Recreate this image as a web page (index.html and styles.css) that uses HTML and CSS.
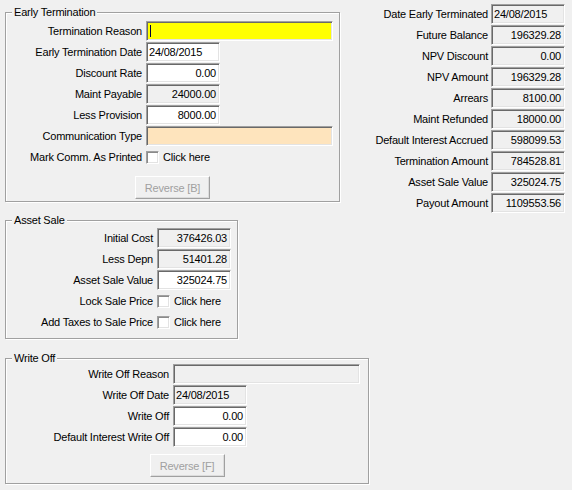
FILE: index.html
```html
<!DOCTYPE html>
<html>
<head>
<meta charset="utf-8">
<link rel="stylesheet" href="styles.css">
</head>
<body>
<div class="top">
  <div class="grp et">
    <div class="legend">Early Termination</div>
    <div class="form et-form">
      <label>Termination Reason</label><div class="box long yellow"><span class="caret"></span></div>
      <label>Early Termination Date</label><div class="box white">24/08/2015</div>
      <label>Discount Rate</label><div class="box white num">0.00</div>
      <label>Maint Payable</label><div class="box ro num">24000.00</div>
      <label>Less Provision</label><div class="box white num">8000.00</div>
      <label>Communication Type</label><div class="box long peach"></div>
      <label>Mark Comm. As Printed</label><div class="check"><span class="cb"></span>Click here</div>
    </div>
    <div class="btnrow b-et"><button class="btn" disabled>Reverse [B]</button></div>
  </div>
  <div class="summary">
    <label>Date Early Terminated</label><div class="box ro">24/08/2015</div>
    <label>Future Balance</label><div class="box ro num">196329.28</div>
    <label>NPV Discount</label><div class="box ro num">0.00</div>
    <label>NPV Amount</label><div class="box ro num">196329.28</div>
    <label>Arrears</label><div class="box ro num">8100.00</div>
    <label>Maint Refunded</label><div class="box ro num">18000.00</div>
    <label>Default Interest Accrued</label><div class="box ro num">598099.53</div>
    <label>Termination Amount</label><div class="box ro num">784528.81</div>
    <label>Asset Sale Value</label><div class="box ro num">325024.75</div>
    <label>Payout Amount</label><div class="box ro num">1109553.56</div>
  </div>
</div>

<div class="grp asset">
  <div class="legend">Asset Sale</div>
  <div class="form asset-form">
    <label>Initial Cost</label><div class="box ro num">376426.03</div>
    <label>Less Depn</label><div class="box ro num">51401.28</div>
    <label>Asset Sale Value</label><div class="box white num">325024.75</div>
    <label>Lock Sale Price</label><div class="check"><span class="cb"></span>Click here</div>
    <label>Add Taxes to Sale Price</label><div class="check"><span class="cb"></span>Click here</div>
  </div>
</div>

<div class="grp wo">
  <div class="legend">Write Off</div>
  <div class="form wo-form">
    <label>Write Off Reason</label><div class="box long ro"></div>
    <label>Write Off Date</label><div class="box ro">24/08/2015</div>
    <label>Write Off</label><div class="box white num">0.00</div>
    <label>Default Interest Write Off</label><div class="box white num">0.00</div>
  </div>
  <div class="btnrow b-wo"><button class="btn" disabled>Reverse [F]</button></div>
</div>
</body>
</html>
```

FILE: styles.css
```css
* { box-sizing: border-box; }
html, body { background: #f0f0f0; }
body {
  margin: 0;
  padding: 0 0 0 5px;
  width: 572px;
  height: 490px;
  overflow: hidden;
  font-family: "Liberation Sans", Arial, sans-serif;
  font-size: 11px;
  letter-spacing: -0.2px;
  color: #000;
}
.top {
  display: flex;
  align-items: flex-start;
}
.grp {
  position: relative;
  border: 1px solid #a0a0a0;
  box-shadow: inset 1px 1px 0 #fff, 1px 1px 0 #fff;
}
.legend {
  position: absolute;
  left: 6px;
  top: -7px;
  line-height: 13px;
  padding: 0 2px 0 2px;
  background: #f0f0f0;
}
.et {
  width: 335px;
  margin-top: 12px;
  padding: 8px 0 2px 0;
}
.asset {
  width: 233px;
  margin-top: 7px;
  padding: 7px 0 6px 0;
}
.wo {
  width: 364px;
  margin-top: 19px;
  padding: 5px 0 6px 0;
}
.form {
  display: grid;
  column-gap: 4px;
  row-gap: 1px;
  grid-auto-rows: 20px;
  align-items: center;
  justify-items: start;
}
.et-form { grid-template-columns: 136px auto; }
.asset-form { grid-template-columns: 147px auto; }
.wo-form { grid-template-columns: 163px auto; }
.form label, .summary label {
  justify-self: end;
  white-space: nowrap;
}
.summary {
  flex: 1;
  padding: 4px 7px 0 0;
  display: grid;
  grid-template-columns: 1fr 74px;
  column-gap: 3px;
  row-gap: 1px;
  grid-auto-rows: 20px;
  align-items: center;
}
.box {
  width: 74px;
  height: 20px;
  line-height: 18px;
  padding: 0 3px 0 2px;
  border: 1px solid;
  border-color: #a0a0a0 #fff #fff #a0a0a0;
  box-shadow: inset 1px 1px 0 #696969, inset -1px -1px 0 #e3e3e3;
  white-space: nowrap;
  overflow: hidden;
}
.box.long { width: 187px; }
.num { text-align: right; }
.white { background: #fff; }
.ro { background: #f0f0f0; }
.yellow { background: #ffff00; }
.peach { background: #fee4bd; }
.caret {
  display: inline-block;
  width: 1px;
  height: 12px;
  margin: 3px 0 0 1px;
  vertical-align: top;
  background: #00003c;
}
.check {
  display: flex;
  align-items: center;
}
.cb {
  width: 13px;
  height: 13px;
  margin-right: 4px;
  background: #fff;
  border: 1px solid;
  border-color: #a0a0a0 #fff #fff #a0a0a0;
  box-shadow: inset 1px 1px 0 #8a8a8a, inset -1px -1px 0 #e3e3e3;
}
.btnrow {
  display: flex;
  justify-content: center;
}
.b-et { margin-top: 9px; }
.b-wo { margin-top: 7px; }
.btn {
  width: 75px;
  height: 23px;
  padding: 0;
  font-family: "Liberation Sans", Arial, sans-serif;
  font-size: 11px;
  letter-spacing: -0.2px;
  color: #a0a0a0;
  background: #f0f0f0;
  border: 1px solid;
  border-color: #fff #a0a0a0 #a0a0a0 #fff;
  box-shadow: 0 0 0 0 transparent, inset -1px -1px 0 #dcdcdc;
}
```
